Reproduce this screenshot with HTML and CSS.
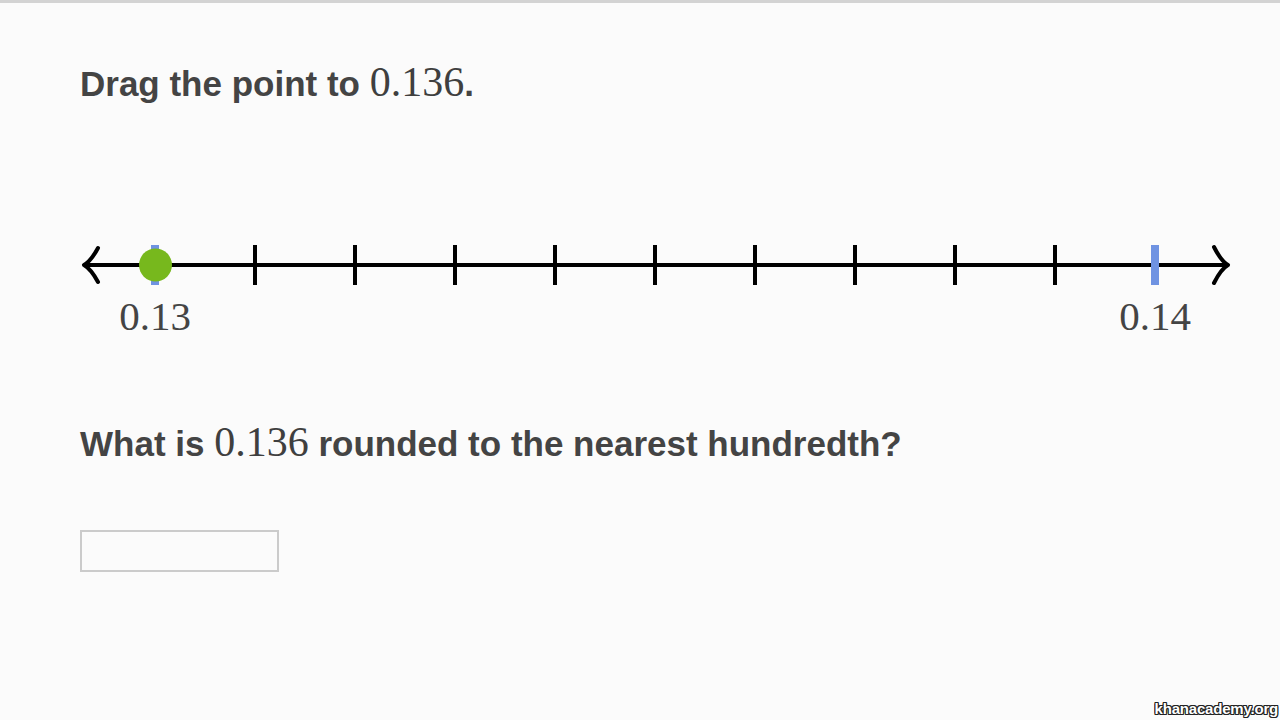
FILE: index.html
```html
<!DOCTYPE html>
<html lang="en">
<head>
<meta charset="utf-8">
<title>Drag the point</title>
<link rel="stylesheet" href="styles.css">
</head>
<body>
<main class="page">
  <h2 class="question q1">Drag the point to <span class="math">0.136</span>.</h2>
  <svg class="numberline" width="1280" height="110" viewBox="0 230 1280 110" xmlns="http://www.w3.org/2000/svg">
    <line x1="84" y1="265" x2="1228" y2="265" stroke="#000" stroke-width="4"/>
    <path d="M98 248 Q91 261 84 265 Q91 269 98 282" fill="none" stroke="#000" stroke-width="4" stroke-linecap="round" stroke-linejoin="round"/>
    <path d="M1214 247 Q1221 261 1228 265 Q1221 269 1214 283" fill="none" stroke="#000" stroke-width="4" stroke-linecap="round" stroke-linejoin="round"/>
    <g stroke="#000" stroke-width="4">
      <line x1="255" y1="245" x2="255" y2="285"/>
      <line x1="355" y1="245" x2="355" y2="285"/>
      <line x1="455" y1="245" x2="455" y2="285"/>
      <line x1="555" y1="245" x2="555" y2="285"/>
      <line x1="655" y1="245" x2="655" y2="285"/>
      <line x1="755" y1="245" x2="755" y2="285"/>
      <line x1="855" y1="245" x2="855" y2="285"/>
      <line x1="955" y1="245" x2="955" y2="285"/>
      <line x1="1055" y1="245" x2="1055" y2="285"/>
    </g>
    <line x1="155" y1="245" x2="155" y2="285" stroke="#6f93e2" stroke-width="8"/>
    <line x1="1155" y1="245" x2="1155" y2="285" stroke="#6f93e2" stroke-width="8"/>
    <circle cx="155.5" cy="265" r="16.5" fill="#77b81d"/>
    <text class="tick-label" x="155" y="330" text-anchor="middle">0.13</text>
    <text class="tick-label" x="1155" y="330" text-anchor="middle">0.14</text>
  </svg>
  <h2 class="question q2">What is <span class="math">0.136</span> rounded to the nearest hundredth?</h2>
  <input class="answer" type="text" aria-label="Answer">
</main>
<div class="watermark">khanacademy.org</div>
</body>
</html>
```
FILE: styles.css
```css
html, body {
  margin: 0;
  padding: 0;
}

body {
  background: #fbfbfb;
  border-top: 3px solid #d3d3d3;
  width: 1280px;
  height: 717px;
  overflow: hidden;
  position: relative;
  font-family: "Liberation Sans", Arial, sans-serif;
}

.page {
  display: flex;
  flex-direction: column;
  align-items: flex-start;
}

.question {
  margin: 0 0 0 80px;
  font-size: 35px;
  line-height: 48px;
  font-weight: bold;
  color: #444444;
  white-space: nowrap;
}

.q1 {
  margin-top: 55px;
}

.q2 {
  margin-top: 78px;
}

.math {
  font-family: "Liberation Serif", "Times New Roman", serif;
  font-weight: normal;
  font-size: 42px;
  color: #3f3f3f;
}

.numberline {
  display: block;
  margin-top: 122px;
}

.tick-label {
  font-family: "Liberation Serif", "Times New Roman", serif;
  font-size: 41px;
  fill: #444444;
}

.answer {
  margin: 62px 0 0 80px;
  width: 199px;
  height: 42px;
  box-sizing: border-box;
  border: 2px solid #cbcbcb;
  background: #fbfbfb;
  outline: none;
  padding: 0;
}

.watermark {
  position: absolute;
  right: 2px;
  bottom: 3px;
  font-family: "Liberation Sans", Arial, sans-serif;
  font-weight: bold;
  font-size: 15px;
  letter-spacing: -0.2px;
  color: #ffffff;
  text-shadow: -1px -1px 0 #222, 1px -1px 0 #222, -1px 1px 0 #222, 1px 1px 0 #222, 0 1px 0 #222, 0 -1px 0 #222, 1px 0 0 #222, -1px 0 0 #222;
}
```
